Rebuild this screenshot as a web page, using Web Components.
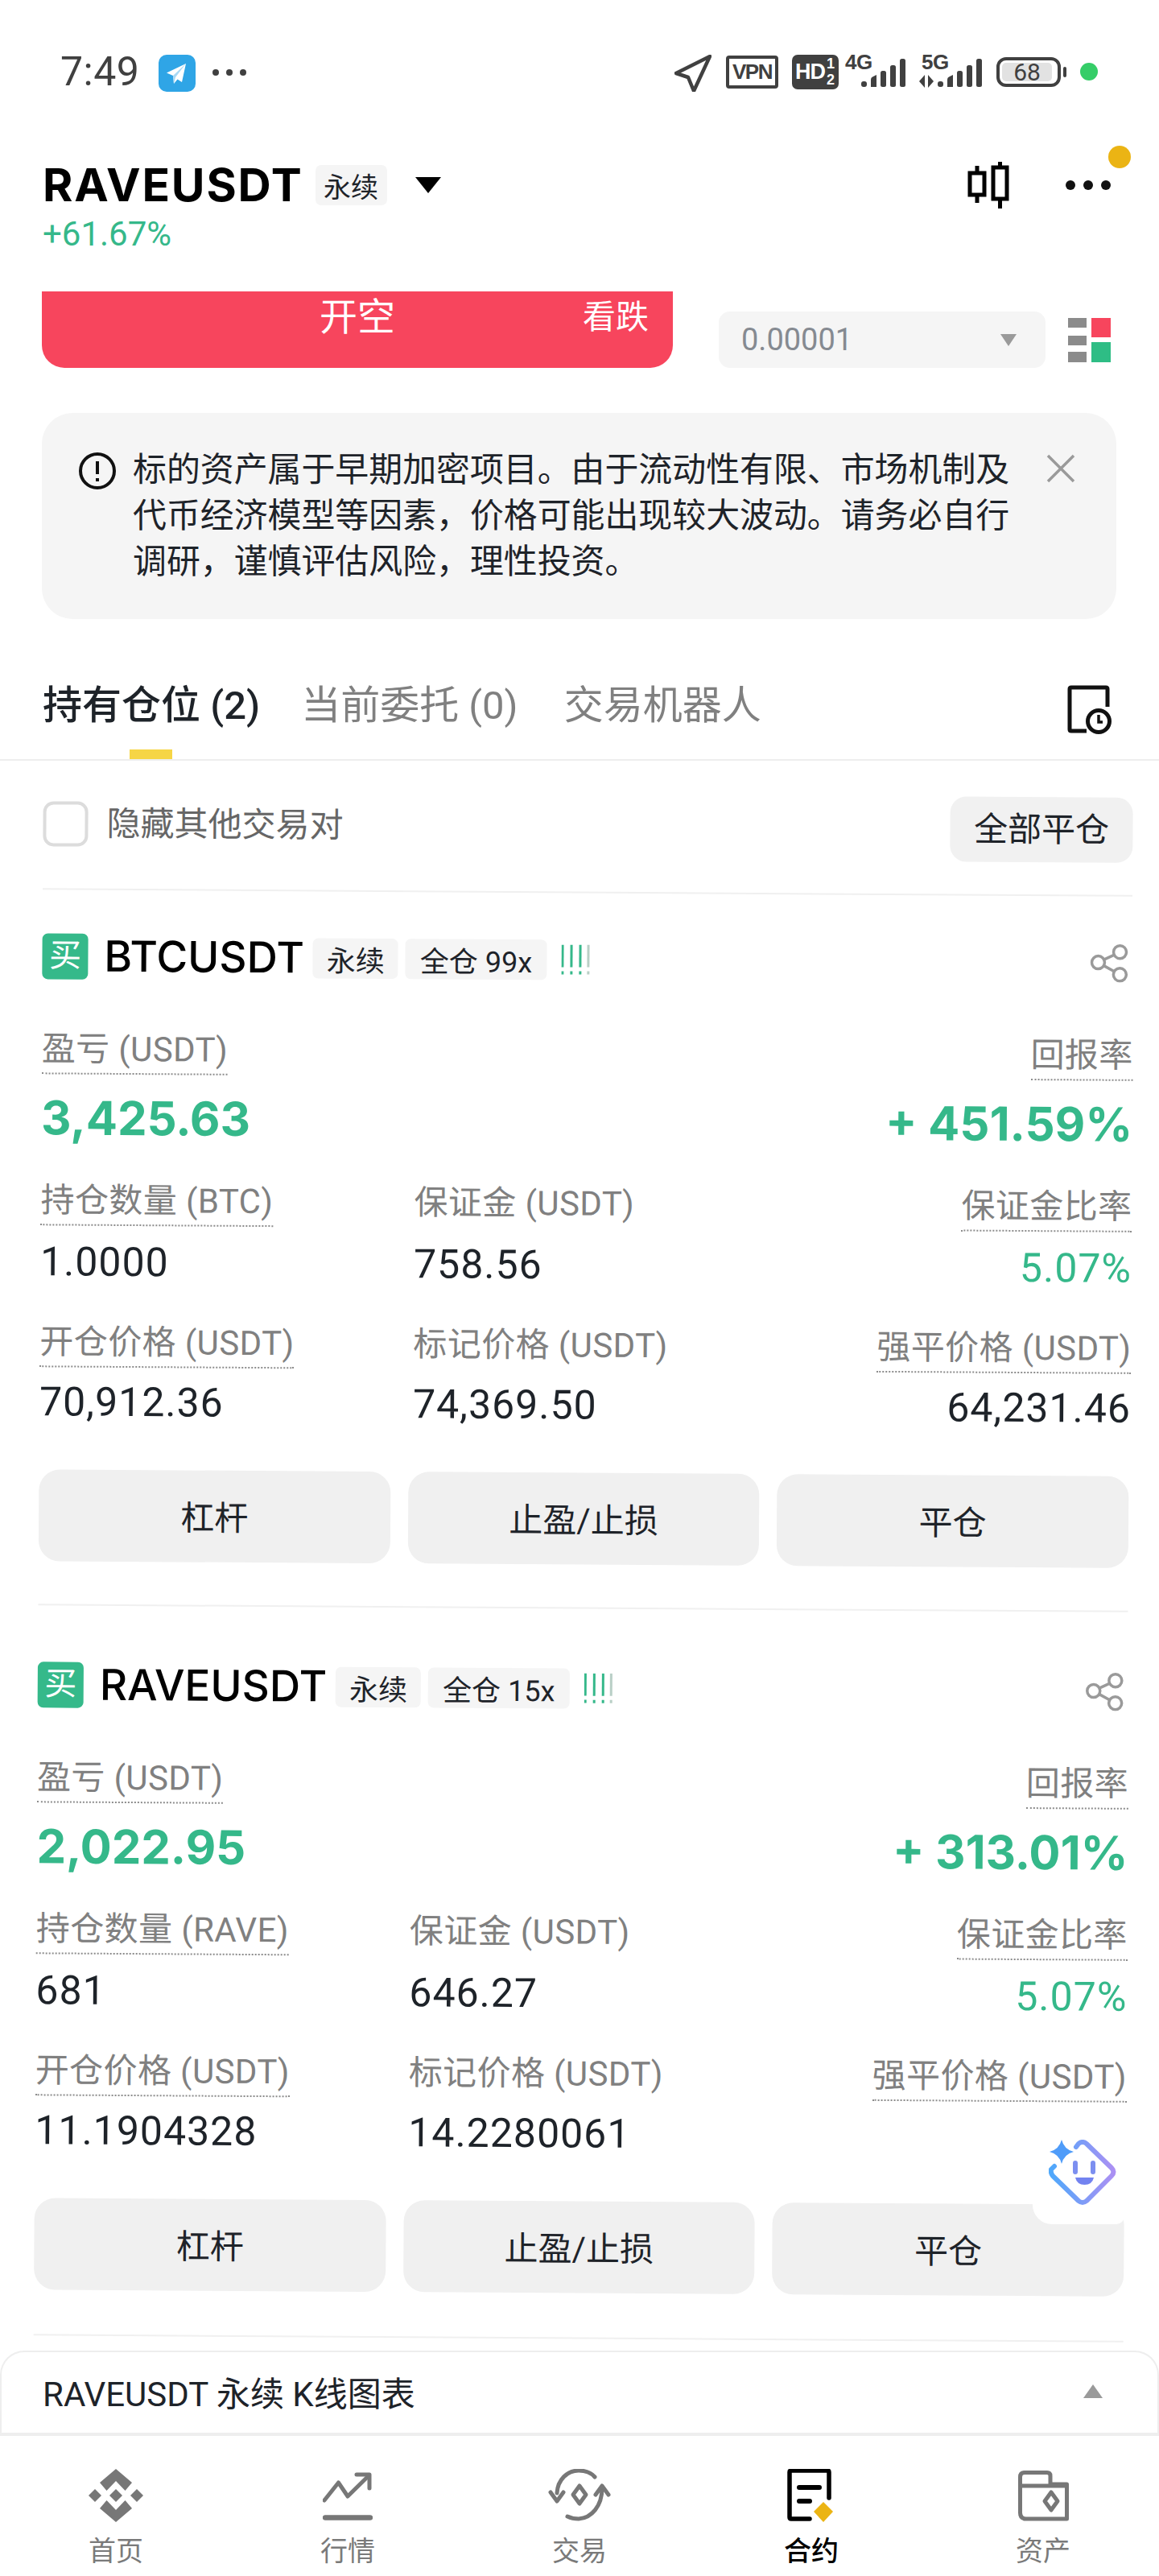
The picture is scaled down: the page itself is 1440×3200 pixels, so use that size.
<!DOCTYPE html>
<html lang="zh-CN">
<head>
<meta charset="utf-8">
<title>RAVEUSDT</title>
<style>
    html, body {
        margin: 0;
        background: #fff;
    }
    body {
        font-family: Roboto, "Noto Sans CJK SC", sans-serif;
        color: #1e2329;
    }
</style>
</head>
<body>
<app-shell>
    <status-bar></status-bar>
    <market-header></market-header>
    <order-strip></order-strip>
    <risk-notice>标的资产属于早期加密项目。由于流动性有限、市场机制及代币经济模型等因素，价格可能出现较大波动。请务必自行调研，谨慎评估风险，理性投资。</risk-notice>
    <position-tabs></position-tabs>
    <position-list>
        <position-card symbol="BTCUSDT" margin-mode="全仓 99x" base="BTC" pnl="3,425.63" roe="+ 451.59%" size="1.0000" margin="758.56" ratio="5.07%" entry="70,912.36" mark="74,369.50" liq="64,231.46"></position-card>
        <position-card symbol="RAVEUSDT" margin-mode="全仓 15x" base="RAVE" pnl="2,022.95" roe="+ 313.01%" size="681" margin="646.27" ratio="5.07%" entry="11.1904328" mark="14.2280061" liq=""></position-card>
    </position-list>
    <chart-panel>RAVEUSDT 永续 K线图表</chart-panel>
    <bottom-nav></bottom-nav>
    <assistant-fab></assistant-fab>
</app-shell>

<script>
(function () {
    class AppShell extends HTMLElement {
        constructor() {
            super();
            this.attachShadow({ mode: 'open' }).innerHTML = `
<style>
    :host {
        display: flex;
        flex-direction: column;
        position: relative;
        width: 1440px;
        height: 3200px;
        overflow: hidden;
        background: #fff;
    }
</style>
<slot></slot>`;
        }
    }

    class StatusBar extends HTMLElement {
        constructor() {
            super();
            const bars = `
                <rect x="0" y="28" width="7" height="7" rx="3"/>
                <path d="M12 35v-9q0-3 3-4l4-2v15z"/>
                <rect x="24" y="15" width="7" height="20" rx="2.5"/>
                <rect x="36" y="8" width="7" height="27" rx="2.5"/>
                <rect x="48" y="0" width="7" height="35" rx="2.5"/>`;
            this.attachShadow({ mode: 'open' }).innerHTML = `
<style>
    :host {
        display: flex;
        align-items: flex-start;
        box-sizing: border-box;
        height: 150px;
        padding: 68px 76px 0 75px;
        color: #404040;
    }
    .time {
        font-size: 50px;
        line-height: 42px;
        width: 122px;
        letter-spacing: 0.5px;
    }
    .tg {
        width: 46px;
        height: 46px;
        display: block;
    }
    .more {
        display: flex;
        gap: 9px;
        margin: 18px 0 0 21px;
    }
    .more i {
        width: 8px;
        height: 8px;
        border-radius: 50%;
        background: #404040;
    }
    .right {
        display: flex;
        align-items: flex-start;
        margin-left: auto;
    }
    .vpn {
        box-sizing: border-box;
        width: 65px;
        height: 41px;
        margin: 1px 0 0 18px;
        border: 4px solid #404040;
        border-radius: 4px;
        font: 700 26px/33px "Liberation Sans", sans-serif;
        text-align: center;
        letter-spacing: -1.5px;
    }
    .hd {
        display: flex;
        box-sizing: border-box;
        width: 58px;
        height: 43px;
        margin-left: 17px;
        padding-left: 4px;
        background: #404040;
        border-radius: 7px;
        color: #fff;
        font: 700 27px/43px "Liberation Sans", sans-serif;
        letter-spacing: -1px;
    }
    .hd span {
        display: flex;
        flex-direction: column;
        align-items: center;
        margin-left: 2px;
        font-size: 18px;
        line-height: 20px;
        padding-top: 1px;
    }
    .hd em {
        font-style: normal;
    }
    .sig {
        position: relative;
        width: 75px;
        height: 42px;
        margin-left: 8px;
    }
    .sig + .sig {
        width: 78px;
        margin-left: 17px;
    }
    .sig b {
        position: absolute;
        left: 0;
        top: -3px;
        font: 700 26px/24px "Liberation Sans", sans-serif;
        letter-spacing: -0.5px;
    }
    .sig svg {
        position: absolute;
        right: 0;
        top: 5px;
        fill: #404040;
    }
    .sig svg.arrows {
        left: 0;
        right: auto;
        top: 25px;
    }
    .batt {
        display: flex;
        align-items: center;
        margin: 3px 0 0 18px;
    }
    .batt div {
        box-sizing: border-box;
        width: 80px;
        height: 37px;
        padding: 3px;
        border: 4px solid #404040;
        border-radius: 12px;
    }
    .batt span {
        display: block;
        width: 62px;
        height: 23px;
        background: #e2e2e2;
        border-radius: 5px;
        text-align: center;
        font-size: 30px;
        line-height: 24px;
    }
    .batt i {
        width: 4px;
        height: 13px;
        margin-left: 3px;
        background: #404040;
        border-radius: 2px;
    }
    .dot {
        width: 22px;
        height: 22px;
        margin: 10px 0 0 17px;
        background: #35cd68;
        border-radius: 50%;
    }
</style>
<div class="time">7:49</div>
<svg class="tg" viewBox="0 0 46 46">
    <rect width="46" height="46" rx="10" fill="#2fa5e6"/>
    <path d="M34 11 10 22.5l8 3.5 1 10 4.5-5.5 5.500 3.500z" fill="#fff"/>
    <path d="M34 11 18 26l1 10 2-8z" fill="#a8d9f5"/>
</svg>
<div class="more"><i></i><i></i><i></i></div>
<div class="right">
    <svg width="46" height="46" viewBox="0 0 46 46"><path d="M44 2 2 23l15 5 7 17z" fill="none" stroke="#404040" stroke-width="4.5" stroke-linejoin="round"/></svg>
    <div class="vpn">VPN</div>
    <div class="hd">HD<span><em>1</em><em>2</em></span></div>
    <div class="sig"><b>4G</b><svg width="55" height="35" viewBox="0 0 55 35">${bars}</svg></div>
    <div class="sig"><b style="left:3px">5G</b>
        <svg class="arrows" width="18" height="16" viewBox="0 0 18 16"><path d="M7 0v16L0 8zM11 0v16l7-8z"/></svg>
        <svg width="55" height="35" viewBox="0 0 55 35">${bars}</svg></div>
    <div class="batt"><div><span>68</span></div><i></i></div>
    <div class="dot"></div>
</div>`;
        }
    }

    class MarketHeader extends HTMLElement {
        constructor() {
            super();
            this.attachShadow({ mode: 'open' }).innerHTML = `
<style>
    :host {
        display: block;
        position: relative;
        box-sizing: border-box;
        height: 163px;
        padding: 50px 0 0 53px;
    }
    .row {
        display: flex;
        align-items: center;
        height: 60px;
    }
    h1 {
        margin: 0;
        font: 700 57px/60px Inter, sans-serif;
        letter-spacing: 1.800px;
        color: #000;
    }
    soft-tag {
        margin-left: 15px;
        --tag-h: 50px;
        --tag-w: 89px;
        --tag-size: 34px;
    }
    .caret {
        margin-left: 35px;
    }
    .change {
        margin-top: 9px;
        font-size: 42px;
        line-height: 44px;
        color: #35b88a;
    }
    .tools {
        display: flex;
        align-items: center;
        margin-left: auto;
        padding-right: 60px;
    }
    .dots {
        display: flex;
        gap: 10px;
        margin-left: 69px;
    }
    .dots i {
        width: 12px;
        height: 12px;
        background: #111;
        border-radius: 50%;
    }
    .alert {
        position: absolute;
        left: 1377px;
        top: 31px;
        width: 28px;
        height: 28px;
        background: #ebb414;
        border-radius: 50%;
    }
</style>
<div class="row">
    <h1>RAVEUSDT</h1>
    <soft-tag>永续</soft-tag>
    <svg class="caret" width="32" height="20" viewBox="0 0 32 20"><path d="M0 0h32L16 20z" fill="#000"/></svg>
    <div class="tools">
        <svg width="54" height="58" viewBox="0 0 54 58" fill="none" stroke="#000" stroke-width="5">
            <rect x="4" y="14" width="18" height="27"/><path d="M13 5v9M13 41v10"/>
            <rect x="33" y="7" width="17" height="39"/><path d="M41.500 0v7M41.500 46v12"/>
        </svg>
        <div class="dots"><i></i><i></i><i></i></div>
    </div>
</div>
<div class="change">+61.67%</div>
<div class="alert"></div>`;
        }
    }

    class SoftTag extends HTMLElement {
        constructor() {
            super();
            this.attachShadow({ mode: 'open' }).innerHTML = `
<style>
    :host {
        display: inline-flex;
        align-items: center;
        justify-content: center;
        box-sizing: border-box;
        height: var(--tag-h, 50px);
        min-width: var(--tag-w, 0);
        padding: 0 var(--tag-pad, 0);
        background: #f5f5f5;
        border-radius: 7px;
        font-size: var(--tag-size, 36px);
        color: #1e2329;
        white-space: pre;
    }
</style>
<slot></slot>`;
        }
    }

    class OrderStrip extends HTMLElement {
        constructor() {
            super();
            this.attachShadow({ mode: 'open' }).innerHTML = `
<style>
    :host {
        display: flex;
        align-items: flex-end;
        padding-left: 52px;
        margin-top: 49px;
    }
    .sell {
        display: grid;
        grid-template-columns: 1fr auto 1fr;
        box-sizing: border-box;
        width: 784px;
        height: 95px;
        padding: 5px 30px 0;
        background: #f7455d;
        border-radius: 0 0 28px 28px;
        color: #fff;
    }
    .sell b {
        grid-column: 2;
        font-weight: 400;
        font-size: 47px;
        line-height: 54px;
    }
    .sell span {
        justify-self: end;
        font-size: 41px;
        line-height: 54px;
    }
    .tick {
        display: flex;
        align-items: center;
        justify-content: space-between;
        box-sizing: border-box;
        width: 406px;
        height: 70px;
        margin-left: 57px;
        padding: 0 36px 0 28px;
        background: #f5f5f5;
        border-radius: 14px;
        font-size: 38px;
        color: #858a91;
    }
    .book {
        display: block;
        margin: 0 0 7px 28px;
    }
</style>
<div class="sell"><b>开空</b><span>看跌</span></div>
<div class="tick">0.00001<svg width="20" height="15" viewBox="0 0 20 15"><path d="M0 0h20L10 15z" fill="#9a9a9a"/></svg></div>
<svg class="book" width="53" height="55" viewBox="0 0 53 55">
    <g fill="#8b8b8b"><rect y="0" width="23" height="12"/><rect y="22" width="23" height="12"/><rect y="42" width="23" height="13"/></g>
    <rect x="29" y="0" width="24" height="24" fill="#f7455d"/>
    <rect x="29" y="30" width="24" height="25" fill="#2ebd85"/>
</svg>`;
        }
    }

    class RiskNotice extends HTMLElement {
        constructor() {
            super();
            this.attachShadow({ mode: 'open' }).innerHTML = `
<style>
    :host {
        display: flex;
        align-items: flex-start;
        box-sizing: border-box;
        width: 1335px;
        margin: 56px 0 0 52px;
        padding: 42px 51px 43px 46px;
        background: #f5f5f5;
        border-radius: 38px;
        font-size: 41.900px;
        line-height: 57px;
        color: #1e2329;
    }
    .info {
        flex: none;
        margin: 7px 21px 0 0;
    }
    .text {
        width: 1092px;
    }
    .close {
        flex: none;
        margin: 9px 0 0 auto;
    }
</style>
<svg class="info" width="46" height="46" viewBox="0 0 46 46" fill="none" stroke="#111" stroke-width="4">
    <circle cx="23" cy="23" r="21"/><path d="M23 11v16"/><path d="M23 32v4"/>
</svg>
<div class="text"><slot></slot></div>
<svg class="close" width="36" height="36" viewBox="0 0 36 36" stroke="#9a9a9a" stroke-width="3.500"><path d="M2 2l32 32M34 2 2 34"/></svg>`;
        }
    }

    class PositionTabs extends HTMLElement {
        constructor() {
            super();
            this.attachShadow({ mode: 'open' }).innerHTML = `
<style>
    :host {
        display: flex;
        box-sizing: border-box;
        height: 176px;
        padding: 78px 58px 0 53px;
        border-bottom: 2px solid #eeeeee;
    }
    .tab {
        position: relative;
        height: 60px;
        font-size: 49px;
        line-height: 60px;
        color: #808080;
        white-space: pre;
    }
    .tab + .tab {
        margin-left: 51px;
    }
    .tab + .tab + .tab {
        margin-left: 57px;
    }
    .on {
        color: #1e2329;
        font-weight: 500;
    }
    .on::after {
        content: "";
        position: absolute;
        left: 108px;
        top: 84px;
        width: 53px;
        height: 12px;
        background: #f6d545;
    }
    svg {
        margin: 4px 0 0 auto;
    }
</style>
<div class="tab on">持有仓位 (2)</div>
<div class="tab">当前委托 (0)</div>
<div class="tab">交易机器人</div>
<svg width="56" height="62" viewBox="0 0 56 62" fill="none" stroke="#111" stroke-width="5">
    <path d="M24 57H5q-2 0-2-2V5q0-2 2-2h43q2 0 2 2v22"/>
    <circle cx="39" cy="45" r="13.500"/>
    <path d="M39 37v9h5" stroke-width="3.500"/>
</svg>`;
        }
    }

    // everything below the tabs sits tilted in the shot, so the list is turned as a whole
    class PositionList extends HTMLElement {
        constructor() {
            super();
            this.attachShadow({ mode: 'open' }).innerHTML = `
<style>
    :host {
        display: block;
        flex: 1;
        min-height: 0;
        overflow: hidden;
    }
    .tilt {
        width: 1440px;
        box-sizing: border-box;
        padding: 37px 32px 0 54px;
        transform: rotate(0.36deg);
        transform-origin: 0 0;
    }
    .head {
        display: flex;
        align-items: flex-start;
        height: 81px;
        margin-bottom: 40px;
        font-size: 42px;
        color: #666;
    }
    .box {
        box-sizing: border-box;
        width: 56px;
        height: 56px;
        margin: 13px 23px 0 0;
        border: 4px solid #dcdcdc;
        border-radius: 13px;
    }
    .label {
        margin-top: 11px;
        line-height: 60px;
    }
    .all {
        margin-left: auto;
        width: 227px;
        height: 81px;
        background: #f1f1f1;
        border-radius: 20px;
        text-align: center;
        font-size: 42px;
        line-height: 81px;
        color: #1e2329;
    }
</style>
<div class="tilt">
    <div class="head">
        <div class="box"></div>
        <div class="label">隐藏其他交易对</div>
        <div class="all">全部平仓</div>
    </div>
    <slot></slot>
</div>`;
        }
    }

    class StatCell extends HTMLElement {
        static get observedAttributes() {
            return ['label'];
        }

        constructor() {
            super();
            this.attachShadow({ mode: 'open' }).innerHTML = `
<style>
    :host {
        display: flex;
        flex-direction: column;
        align-items: flex-start;
    }
    :host([align="end"]) {
        align-items: flex-end;
    }
    .label {
        box-sizing: border-box;
        height: 56px;
        font-size: 42px;
        letter-spacing: 0.4px;
        line-height: 50px;
        color: #808080;
        white-space: pre;
    }
    :host([hint]) .label {
        border-bottom: 2px dotted #8c8c8c;
    }
    .value {
        margin-top: var(--value-gap, 15px);
        font-size: var(--value-size, 50px);
        font-weight: var(--value-weight, 400);
        letter-spacing: var(--value-track, 1px);
        line-height: var(--value-line, 60px);
        min-height: var(--value-line, 60px);
        color: var(--value-color, #1e2329);
        font-family: var(--value-font, inherit);
    }
</style>
<div class="label"></div>
<div class="value"><slot></slot></div>`;
        }

        attributeChangedCallback(name, oldValue, newValue) {
            this.shadowRoot.querySelector('.label').textContent = newValue;
        }
    }

    class ActionBtn extends HTMLElement {
        constructor() {
            super();
            this.attachShadow({ mode: 'open' }).innerHTML = `
<style>
    :host {
        display: flex;
        align-items: center;
        justify-content: center;
        box-sizing: border-box;
        height: 114px;
        padding-bottom: 4px;
        background: #f0f0f0;
        border-radius: 26px;
        font-size: 42px;
        color: #1e2329;
    }
</style>
<slot></slot>`;
        }
    }

    class PositionCard extends HTMLElement {
        connectedCallback() {
            const a = (name) => this.getAttribute(name) || '';
            this.attachShadow({ mode: 'open' }).innerHTML = `
<style>
    :host {
        display: block;
        box-sizing: border-box;
        width: 1354px;
        padding: 70px 0 55px;
        border-top: 2px solid #f0f0f0;
    }
    :host(:first-child) {
        padding: 54px 0 53px;
    }
    :host(:last-child) {
        border-bottom: 2px solid #f0f0f0;
    }
    .title {
        display: flex;
        align-items: center;
        height: 57px;
    }
    .buy {
        width: 57px;
        height: 57px;
        background: #35b98a;
        border-radius: 7px;
        color: #fff;
        text-align: center;
        font-size: 40px;
        line-height: 55px;
    }
    .symbol {
        margin-left: 20px;
        font: 500 53px/57px Inter, sans-serif;
        color: #000;
    }
    soft-tag {
        margin-left: 11px;
        --tag-size: 36px;
        --tag-w: 106px;
    }
    soft-tag + soft-tag {
        margin-left: 9px;
        --tag-pad: 18px;
    }
    .bars {
        margin-left: 18px;
    }
    .share {
        margin-left: auto;
        margin-right: 4px;
    }
    .grid {
        display: grid;
        grid-template-columns: 464px 1fr auto;
        margin: 62px -2px 0 0;
        row-gap: 43px;
    }
    .big {
        --value-size: 58px;
        --value-weight: 700;
        --value-track: 0;
        --value-line: 70px;
        --value-gap: 19px;
        --value-color: #35b88a;
        --value-font: Inter, sans-serif;
    }
    .good {
        --value-color: #35b88a;
    }
    .last {
        margin-top: 2px;
        --value-gap: 13px;
    }
    .actions {
        display: grid;
        grid-template-columns: repeat(3, 1fr);
        gap: 22px;
        margin-top: 54px;
    }
</style>
<div class="title">
    <div class="buy">买</div>
    <div class="symbol">${a('symbol')}</div>
    <soft-tag>永续</soft-tag>
    <soft-tag>${a('margin-mode')}</soft-tag>
    <svg class="bars" width="36" height="38" viewBox="0 0 36 38" fill="#35b88a">
        <rect x="0" width="3" height="28"/><rect x="0" y="33" width="3" height="4"/>
        <rect x="11" width="3" height="28"/><rect x="11" y="33" width="3" height="4"/>
        <rect x="22" width="3" height="28"/><rect x="22" y="33" width="3" height="4"/>
        <rect x="32" width="3" height="28" fill="#b9cfc6"/><rect x="32" y="33" width="3" height="4" fill="#b9cfc6"/>
    </svg>
    <svg class="share" width="48" height="48" viewBox="0 0 48 48" fill="none" stroke="#9a9a9a" stroke-width="3.500">
        <circle cx="37" cy="10" r="8"/><circle cx="10" cy="23" r="8"/><circle cx="37" cy="38" r="8"/>
        <path d="M17 19.500 30 13.500M17 27l13 7"/>
    </svg>
</div>
<div class="grid">
    <stat-cell class="big" hint label="盈亏 (USDT)">${a('pnl')}</stat-cell>
    <div></div>
    <stat-cell class="big" hint align="end" label="回报率">${a('roe')}</stat-cell>

    <stat-cell hint label="持仓数量 (${a('base')})">${a('size')}</stat-cell>
    <stat-cell label="保证金 (USDT)">${a('margin')}</stat-cell>
    <stat-cell class="good" hint align="end" label="保证金比率">${a('ratio')}</stat-cell>

    <stat-cell class="last" hint label="开仓价格 (USDT)">${a('entry')}</stat-cell>
    <stat-cell class="last" label="标记价格 (USDT)">${a('mark')}</stat-cell>
    <stat-cell class="last" hint align="end" label="强平价格 (USDT)">${a('liq')}</stat-cell>
</div>
<div class="actions">
    <action-btn>杠杆</action-btn>
    <action-btn>止盈/止损</action-btn>
    <action-btn>平仓</action-btn>
</div>`;
        }
    }

    class ChartPanel extends HTMLElement {
        constructor() {
            super();
            this.attachShadow({ mode: 'open' }).innerHTML = `
<style>
    :host {
        display: flex;
        align-items: center;
        justify-content: space-between;
        flex: none;
        box-sizing: border-box;
        height: 106px;
        padding: 0 68px 4px 51px;
        background: #fff;
        border: 2px solid #eeeeee;
        border-bottom-width: 4px;
        border-radius: 30px 30px 0 0;
        font-size: 42px;
        color: #1e2329;
        position: relative;
    }
</style>
<div><slot></slot></div>
<svg width="24" height="17" viewBox="0 0 24 17"><path d="M12 0l12 17H0z" fill="#9a9a9a"/></svg>`;
        }
    }

    class BottomNav extends HTMLElement {
        constructor() {
            super();
            this.attachShadow({ mode: 'open' }).innerHTML = `
<style>
    :host {
        display: grid;
        grid-template-columns: repeat(5, 1fr);
        flex: none;
        height: 174px;
        background: #fff;
        position: relative;
        color: #7a7a7a;
        font-size: 34px;
    }
    div {
        display: flex;
        flex-direction: column;
        align-items: center;
        padding-top: 41px;
    }
    svg {
        display: block;
        height: 66px;
    }
    span {
        margin-top: 18px;
        line-height: 36px;
    }
    .on {
        color: #000;
        font-weight: 500;
    }
</style>
<div>
    <svg width="68" viewBox="0 0 68 66" fill="#777">
        <path d="M34 0 14 17 22.500 27 34 15 45.500 27 54 17z"/>
        <path d="M34 66 14 49 22.500 39 34 51 45.500 39 54 49z"/>
        <path d="M8 25 16 33 8 41 0 33zM34 25 42 33 34 41 26 33zM60 25 68 33 60 41 52 33z"/>
    </svg>
    <span>首页</span>
</div>
<div>
    <svg width="62" viewBox="0 0 62 66" fill="none" stroke="#777" stroke-linecap="round" stroke-linejoin="round">
        <path d="M2 39 19.500 17 31 34 56 9.500" stroke-width="5"/>
        <path d="M42 7h16v17" stroke-width="5"/>
        <path d="M3 60.500H59" stroke-width="6.500"/>
    </svg>
    <span>行情</span>
</div>
<div>
    <svg width="78" viewBox="0 0 78 66" fill="none" stroke="#777" stroke-width="5" stroke-linecap="round" stroke-linejoin="round">
        <path d="M58 10C52 3 45 2 38 2 24 2 12 13 11 30"/>
        <path d="M3 29l8 11 8-11"/>
        <path d="M24 59c4 2 9 3 14 3 16-1 29-16 29-38"/>
        <path d="M59 32l8-11 8 11"/>
        <path d="M39 21l8 11-8 11-8-11z"/>
    </svg>
    <span>交易</span>
</div>
<div class="on">
    <svg width="60" viewBox="0 0 60 66" fill="none" stroke="#000" stroke-width="5.500" stroke-linecap="round">
        <path d="M28 62H5q-2 0-2-2V4q0-2 2-2h45q2 0 2 2v32"/>
        <path d="M15 23H40M15 40H28" stroke-width="6"/>
        <path d="M45 41l12 12-12 13-12-13z" fill="#ebb414" stroke="none"/>
    </svg>
    <span>合约</span>
</div>
<div>
    <svg width="63" viewBox="0 0 63 66" fill="none" stroke="#777" stroke-width="5" stroke-linejoin="round">
        <path d="M8 4.500H36q4 0 4 4V19H60.500V62H10q-7.500 0-7.500-7.500V10q0-5.500 5.500-5.500z"/>
        <path d="M2.500 21H60"/>
        <path d="M41 29l8 11-8 11-8-11z"/>
    </svg>
    <span>资产</span>
</div>`;
        }
    }

    class AssistantFab extends HTMLElement {
        constructor() {
            super();
            this.attachShadow({ mode: 'open' }).innerHTML = `
<style>
    :host {
        display: flex;
        position: absolute;
        left: 1283px;
        top: 2635px;
        box-sizing: border-box;
        width: 114px;
        height: 128px;
        padding: 23px 0 0 20px;
        background: #fff;
        border-radius: 0 0 10px 24px;
    }
</style>
<svg width="84" height="82" viewBox="0 0 84 82">
    <defs>
        <linearGradient id="ai" x1="0" y1="0" x2="1" y2="0">
            <stop offset="0" stop-color="#4fa8fb"/>
            <stop offset="1" stop-color="#ab90f3"/>
        </linearGradient>
    </defs>
    <path d="M34 9l3-4q5-4 10 0l31 30q5 5 0 10L47 76q-5 4-10 0L5 45q-3-4-2-8l4-4" fill="none" stroke="url(#ai)" stroke-width="6" stroke-linecap="round"/>
    <path d="M16 0q3 12 15 15-12 3-15 15-3-12-15-15 12-3 15-15z" fill="#4f9cf9"/>
    <path d="M33 29v11M55 29v11" stroke="#7c8ff0" stroke-width="6" stroke-linecap="round"/>
    <path d="M33 47h23q-2 9-11.500 9T33 47z" fill="#7383f0"/>
</svg>`;
        }
    }

    customElements.define('soft-tag', SoftTag);
    customElements.define('stat-cell', StatCell);
    customElements.define('action-btn', ActionBtn);
    customElements.define('app-shell', AppShell);
    customElements.define('status-bar', StatusBar);
    customElements.define('market-header', MarketHeader);
    customElements.define('order-strip', OrderStrip);
    customElements.define('risk-notice', RiskNotice);
    customElements.define('position-tabs', PositionTabs);
    customElements.define('position-list', PositionList);
    customElements.define('position-card', PositionCard);
    customElements.define('chart-panel', ChartPanel);
    customElements.define('bottom-nav', BottomNav);
    customElements.define('assistant-fab', AssistantFab);
})();
</script>
</body>
</html>
